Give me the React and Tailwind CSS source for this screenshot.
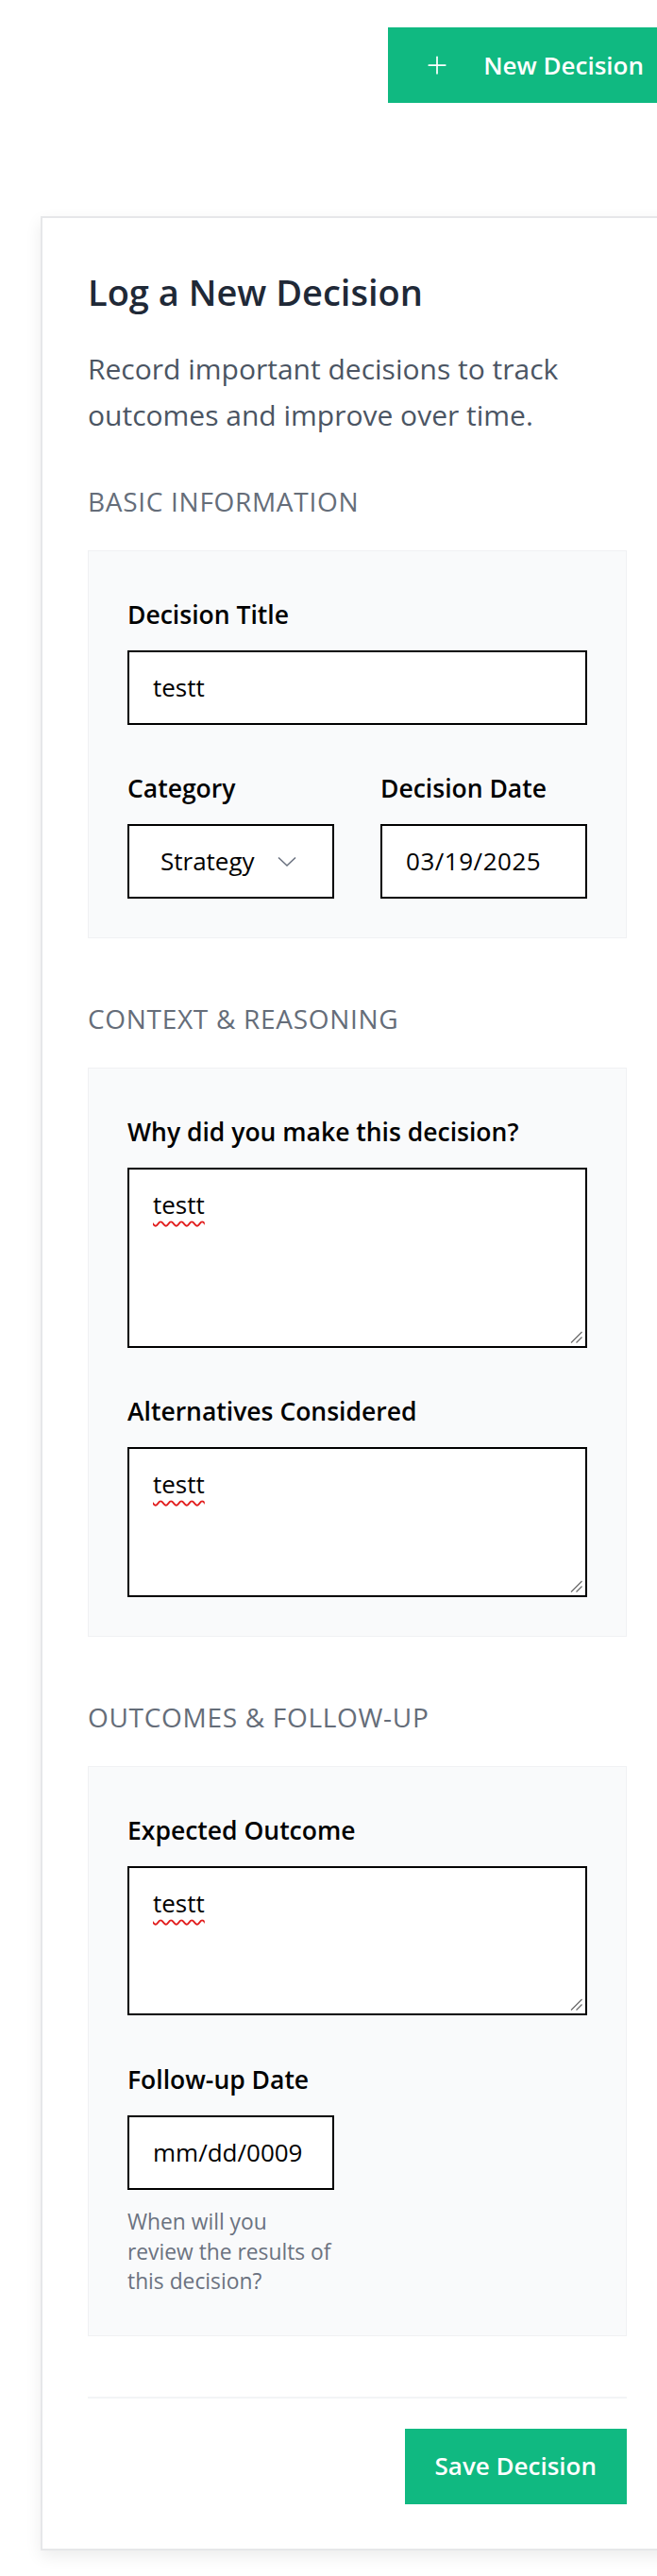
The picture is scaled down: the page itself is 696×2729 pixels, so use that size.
import { Plus } from 'lucide-react';

function Label({ children }) {
  return <div className="text-[26.5px] leading-[36px] font-semibold text-black">{children}</div>;
}

function SectionTitle({ children, className = '' }) {
  return (
    <div className={`text-[28px] leading-[36px] font-medium tracking-[0.025em] uppercase text-[#656d79] ${className}`}>
      {children}
    </div>
  );
}

function Panel({ children }) {
  return (
    <div className="mt-[34px] bg-[#f9fafb] border border-[#f0f1f3] px-[41px] pt-[49px] pb-[41px]">
      {children}
    </div>
  );
}

function ResizeHandle() {
  return (
    <svg className="absolute right-[3px] bottom-[3px]" width="13" height="13" viewBox="0 0 13 13">
      <line x1="1" y1="12.5" x2="12.5" y2="1" stroke="#6b6b6b" strokeWidth="1.2" />
      <line x1="6.5" y1="12.5" x2="12.5" y2="6.5" stroke="#6b6b6b" strokeWidth="1.2" />
    </svg>
  );
}

function TextArea({ value, height }) {
  return (
    <div
      className="relative mt-[20px] border-2 border-black bg-white pl-[25px] pt-[19px] text-[26px] leading-[36px] text-black"
      style={{ height }}
    >
      <span className="underline decoration-wavy decoration-[#e11d1d] decoration-[1.5px] underline-offset-[7px]">
        {value}
      </span>
      <ResizeHandle />
    </div>
  );
}

function TextBox({ children, className = '' }) {
  return (
    <div
      className={`mt-[20px] h-[79px] border-2 border-black bg-white flex items-center text-[26px] text-black ${className}`}
    >
      {children}
    </div>
  );
}

export default function App() {
  return (
    <div className="w-[696px] h-[2729px] overflow-hidden bg-white font-['Open_Sans',sans-serif]">
      <div className="w-[718px]">
        <div className="flex justify-end pt-[29px]">
          <button className="h-[80px] flex items-center bg-[#10b981] text-white pl-[37px] pr-[36px]">
            <Plus size={30} strokeWidth={1.4} />
            <span className="ml-[34px] text-[26px] font-semibold">New Decision</span>
          </button>
        </div>

        <div className="ml-[43px] mt-[120px] w-[671px] border-2 border-[#e6e7e9] bg-white shadow-[0_6px_16px_rgba(0,0,0,0.08)] px-[48px] pt-[56px] pb-[47px]">
          <h1 className="text-[38px] leading-[44px] font-semibold text-[#1f2937]">Log a New Decision</h1>
          <p className="mt-[36px] text-[30px] leading-[48.7px] text-[#4b5563]">
            Record important decisions to track outcomes and improve over time.
          </p>

          <SectionTitle className="mt-[49px]">Basic Information</SectionTitle>
          <Panel>
            <Label>Decision Title</Label>
            <TextBox className="pl-[25px]">testt</TextBox>
            <div className="mt-[49px] grid grid-cols-2 gap-x-[49px]">
              <div>
                <Label>Category</Label>
                <TextBox className="pl-[33px]">
                  <span>Strategy</span>
                  <svg className="ml-[24px]" width="20" height="12" viewBox="0 0 20 12">
                    <polyline points="1,1.5 10,10 19,1.5" fill="none" stroke="#6b7280" strokeWidth="1.6" />
                  </svg>
                </TextBox>
              </div>
              <div>
                <Label>Decision Date</Label>
                <TextBox className="pl-[25px] tracking-[0.02em]">03/19/2025</TextBox>
              </div>
            </div>
          </Panel>

          <SectionTitle className="mt-[67px]">Context &amp; Reasoning</SectionTitle>
          <Panel>
            <Label>Why did you make this decision?</Label>
            <TextArea value="testt" height={191} />
            <div className="mt-[49px]">
              <Label>Alternatives Considered</Label>
              <TextArea value="testt" height={159} />
            </div>
          </Panel>

          <SectionTitle className="mt-[67px]">Outcomes &amp; Follow-up</SectionTitle>
          <Panel>
            <Label>Expected Outcome</Label>
            <TextArea value="testt" height={158} />
            <div className="mt-[50px] grid grid-cols-2 gap-x-[49px]">
              <div>
                <Label>Follow-up Date</Label>
                <TextBox className="pl-[25px]">mm/dd/0009</TextBox>
                <p className="mt-[18px] text-[22.8px] leading-[31.5px] text-[#6b7280]">
                  When will you review the results of this decision?
                </p>
              </div>
            </div>
          </Panel>

          <div className="mt-[64px] h-[2px] bg-[#f3f4f6]" />
          <div className="mt-[32px] flex justify-end">
            <button className="h-[80px] px-[32px] bg-[#10b981] text-white text-[26px] font-semibold">
              Save Decision
            </button>
          </div>
        </div>
      </div>
    </div>
  );
}
